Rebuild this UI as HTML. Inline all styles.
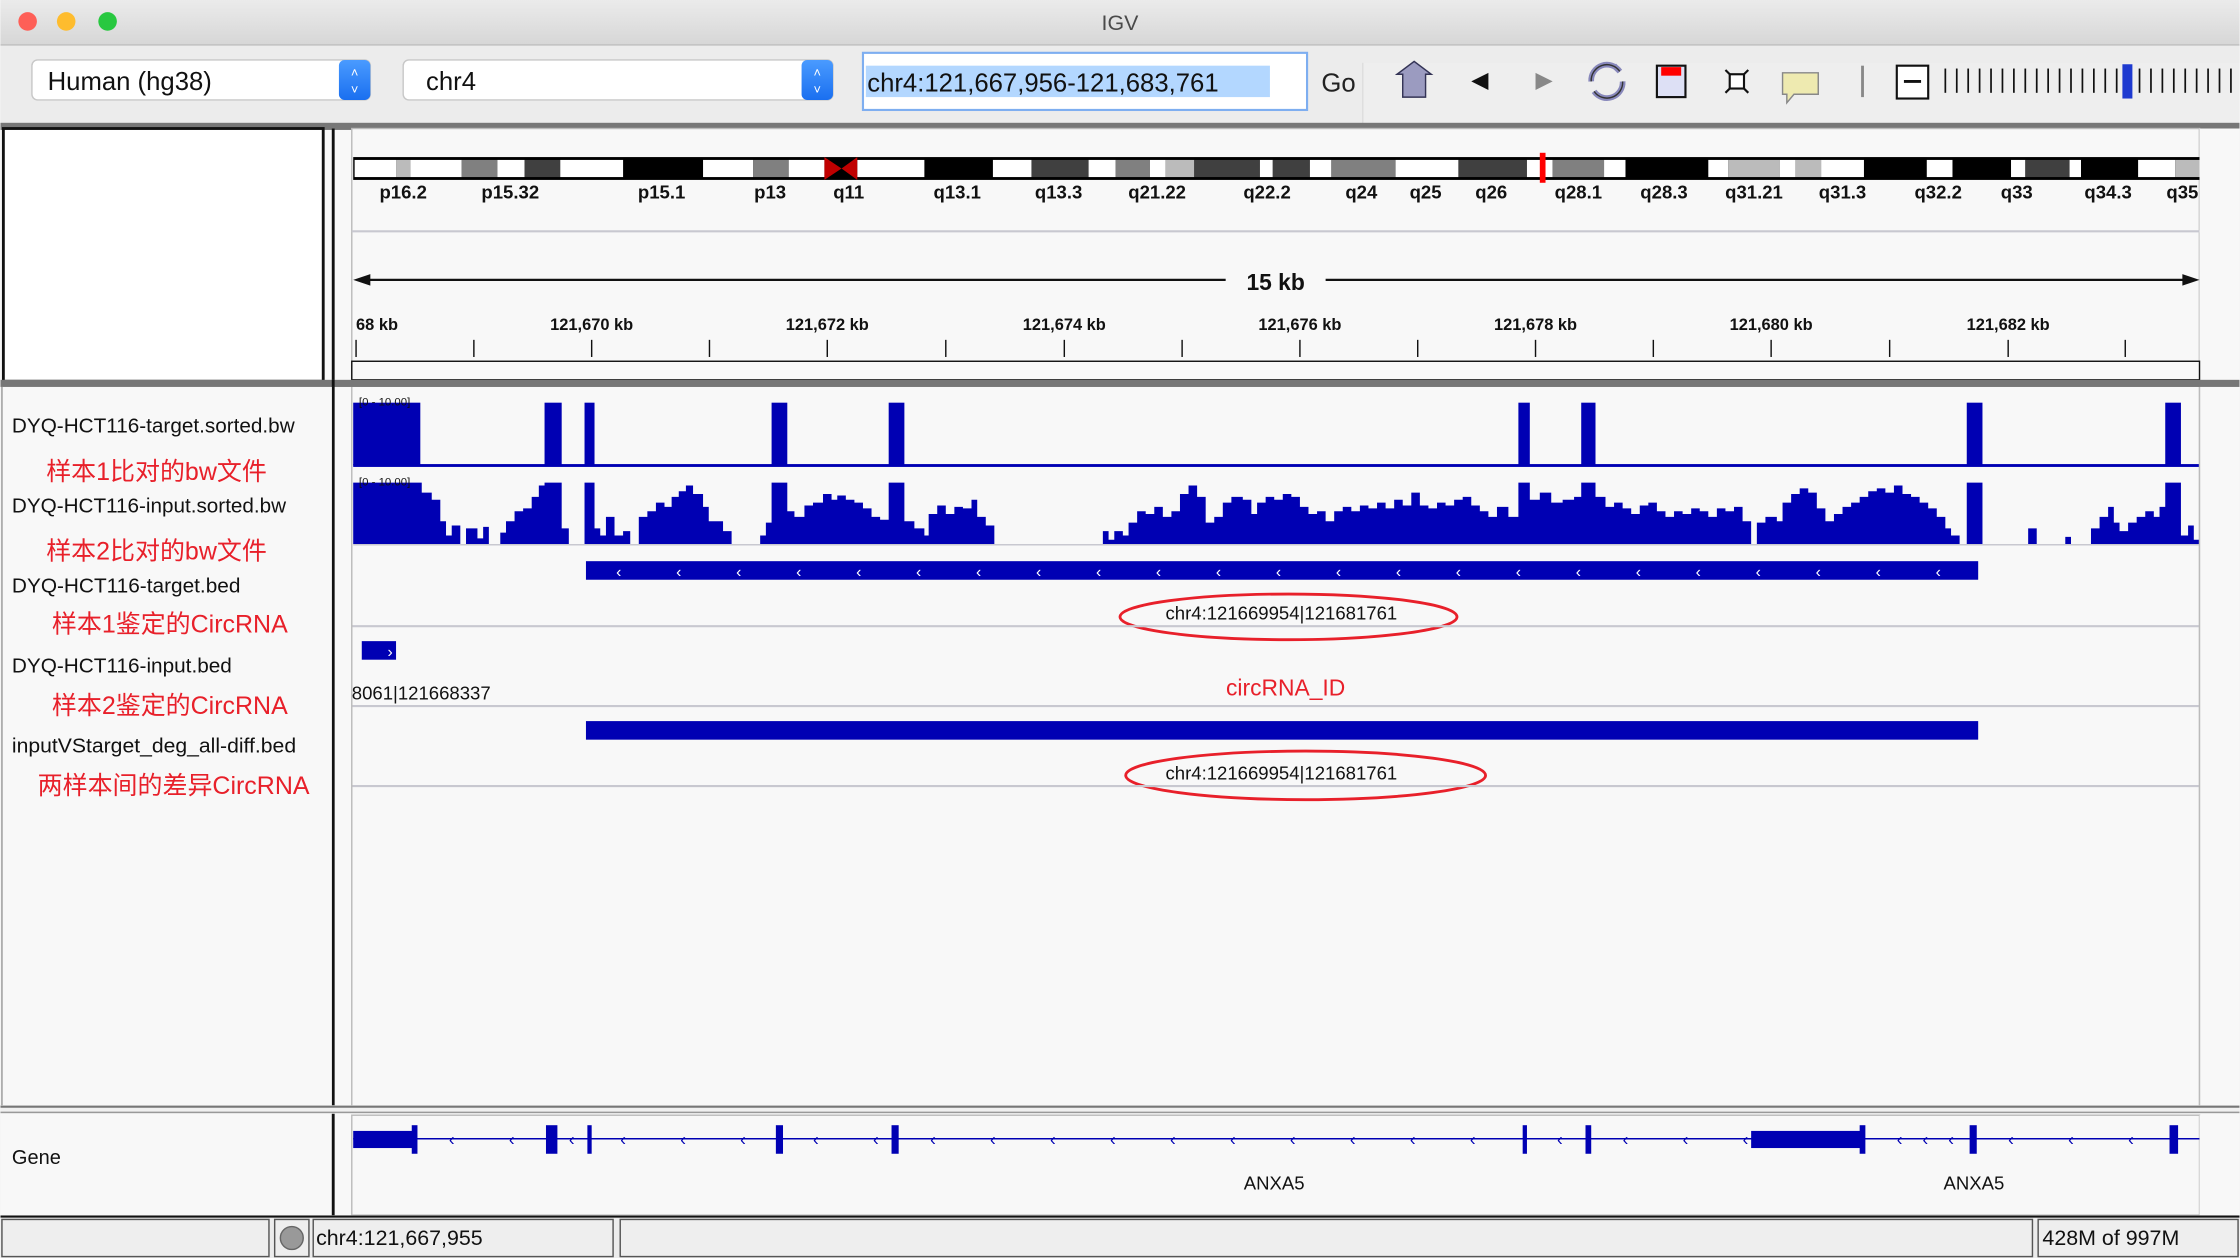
<!DOCTYPE html>
<html><head><meta charset="utf-8"><style>
html,body{margin:0;padding:0;background:#f5f5f5;}
svg{display:block}
text{font-family:"Liberation Sans","Noto Sans CJK SC",sans-serif;}
</style></head><body>
<svg width="2240" height="1258" viewBox="0 0 1568 881" xmlns="http://www.w3.org/2000/svg">
<defs>
<linearGradient id="tb" x1="0" y1="0" x2="0" y2="1"><stop offset="0" stop-color="#ebebeb"/><stop offset="1" stop-color="#d6d6d6"/></linearGradient>
<linearGradient id="bl" x1="0" y1="0" x2="0" y2="1"><stop offset="0" stop-color="#4a9bff"/><stop offset="1" stop-color="#1a6ff0"/></linearGradient>
</defs>
<rect width="1568" height="881" fill="#f8f8f8"/>
<rect width="1568" height="32" fill="url(#tb)"/>
<line x1="0" y1="31.5" x2="1568" y2="31.5" stroke="#bdbdbd"/>
<circle cx="19" cy="15" r="6.5" fill="#fe5f57"/><circle cx="46" cy="15" r="6.5" fill="#febc2e"/><circle cx="75" cy="15" r="6.5" fill="#28c840"/>
<text x="784" y="21" font-size="15" fill="#4a4a4a" text-anchor="middle">IGV</text>
<rect x="0" y="32" width="1568" height="56" fill="#ececec"/>
<rect x="954" y="44" width="614" height="44" fill="#eeeeee"/>
<line x1="954" y1="44" x2="954" y2="88" stroke="#ddd"/>
<rect x="22" y="42" width="237" height="28" rx="4" fill="#fff" stroke="#c8c8c8"/>
<rect x="237" y="42" width="22" height="28" rx="4" fill="url(#bl)"/>
<text x="248" y="54" font-size="9" fill="#fff" text-anchor="middle">˄</text><text x="248" y="66" font-size="9" fill="#fff" text-anchor="middle">˅</text>
<text x="33" y="63" font-size="18" fill="#111">Human (hg38)</text>
<rect x="282" y="42" width="301" height="28" rx="4" fill="#fff" stroke="#c8c8c8"/>
<rect x="561" y="42" width="22" height="28" rx="4" fill="url(#bl)"/>
<text x="572" y="54" font-size="9" fill="#fff" text-anchor="middle">˄</text><text x="572" y="66" font-size="9" fill="#fff" text-anchor="middle">˅</text>
<text x="298" y="63" font-size="18" fill="#111">chr4</text>
<rect x="604" y="37" width="311" height="40" fill="#fff" stroke="#7eaef0" stroke-width="1.5"/>
<rect x="606" y="46" width="283" height="22" fill="#b3d7ff"/>
<text x="607" y="64" font-size="18" fill="#111">chr4:121,667,956-121,683,761</text>
<text x="925" y="64" font-size="18" fill="#222">Go</text>
<path d="M978 52 L990 43 L1002 52 L998 52 L998 68 L982 68 L982 52 Z" fill="#9b9bc0" stroke="#333355"/>
<path d="M1042 51 L1030 57 L1042 63 Z" fill="#111"/>
<path d="M1075 51 L1087 57 L1075 63 Z" fill="#888"/>
<path d="M1114 57 A11 11 0 0 1 1134 50 L1130 46 M1136 57 A11 11 0 0 1 1116 64" fill="none" stroke="#8888bb" stroke-width="4"/>
<path d="M1114 57 A11 11 0 0 1 1134 50 M1136 57 A11 11 0 0 1 1116 64" fill="none" stroke="#333" stroke-width="1"/>
<rect x="1160" y="46" width="20" height="22" fill="#dde0f5" stroke="#111" stroke-width="1.5"/><rect x="1163" y="47" width="14" height="6" fill="#f00"/>
<path d="M1208 49 L1212 53 M1224 49 L1220 53 M1208 65 L1212 61 M1224 65 L1220 61" stroke="#111" stroke-width="1.5"/>
<rect x="1211" y="52" width="10" height="10" fill="#fff" stroke="#111" stroke-width="1.5"/>
<path d="M1248 51 H1273 V66 H1256 L1251 72 V66 H1248 Z" fill="#eeeab0" stroke="#888"/>
<line x1="1304" y1="46" x2="1304" y2="68" stroke="#888" stroke-width="2"/>
<rect x="1328" y="46" width="22" height="23" fill="#fff" stroke="#111" stroke-width="1.5"/><line x1="1333" y1="57" x2="1345" y2="57" stroke="#111" stroke-width="2"/>
<g stroke="#111" stroke-width="1.2">
<line x1="1362" y1="48" x2="1362" y2="65"/><line x1="1370" y1="48" x2="1370" y2="65"/><line x1="1378" y1="48" x2="1378" y2="65"/><line x1="1386" y1="48" x2="1386" y2="65"/><line x1="1394" y1="48" x2="1394" y2="65"/><line x1="1402" y1="48" x2="1402" y2="65"/><line x1="1410" y1="48" x2="1410" y2="65"/><line x1="1418" y1="48" x2="1418" y2="65"/><line x1="1426" y1="48" x2="1426" y2="65"/><line x1="1434" y1="48" x2="1434" y2="65"/><line x1="1442" y1="48" x2="1442" y2="65"/><line x1="1450" y1="48" x2="1450" y2="65"/><line x1="1458" y1="48" x2="1458" y2="65"/><line x1="1466" y1="48" x2="1466" y2="65"/><line x1="1474" y1="48" x2="1474" y2="65"/><line x1="1482" y1="48" x2="1482" y2="65"/><line x1="1498" y1="48" x2="1498" y2="65"/><line x1="1506" y1="48" x2="1506" y2="65"/><line x1="1514" y1="48" x2="1514" y2="65"/><line x1="1522" y1="48" x2="1522" y2="65"/><line x1="1530" y1="48" x2="1530" y2="65"/><line x1="1538" y1="48" x2="1538" y2="65"/><line x1="1546" y1="48" x2="1546" y2="65"/><line x1="1554" y1="48" x2="1554" y2="65"/><line x1="1562" y1="48" x2="1562" y2="65"/>
</g>
<rect x="1486" y="45" width="7" height="24" fill="#1e3ad0"/>
<rect x="0" y="86" width="1568" height="5" fill="#777"/>
<rect x="2" y="90" width="224" height="177" fill="#fff" stroke="#111" stroke-width="2"/>
<rect x="232" y="90" width="2" height="791" fill="#111"/>
<rect x="246" y="90" width="1294" height="178" fill="#f8f8f8" stroke="#bbb"/>
<line x1="1540" y1="90" x2="1540" y2="775" stroke="#bbb"/>
<rect x="247" y="110" width="1293" height="16" fill="#000"/>
<g>
<rect x="248" y="112" width="29" height="12" fill="#fff"/><rect x="277" y="112" width="10" height="12" fill="#bbb"/><rect x="287" y="112" width="36" height="12" fill="#fff"/><rect x="323" y="112" width="25" height="12" fill="#808080"/><rect x="348" y="112" width="19" height="12" fill="#fff"/><rect x="367" y="112" width="25" height="12" fill="#404040"/><rect x="392" y="112" width="44" height="12" fill="#fff"/><rect x="492" y="112" width="35" height="12" fill="#fff"/><rect x="527" y="112" width="25" height="12" fill="#808080"/><rect x="552" y="112" width="25" height="12" fill="#fff"/>
<rect x="600" y="112" width="47" height="12" fill="#fff"/><rect x="695" y="112" width="27" height="12" fill="#fff"/><rect x="722" y="112" width="40" height="12" fill="#404040"/><rect x="762" y="112" width="19" height="12" fill="#fff"/><rect x="781" y="112" width="24" height="12" fill="#808080"/><rect x="805" y="112" width="11" height="12" fill="#fff"/><rect x="816" y="112" width="20" height="12" fill="#bbb"/><rect x="836" y="112" width="46" height="12" fill="#404040"/><rect x="882" y="112" width="9" height="12" fill="#fff"/><rect x="891" y="112" width="26" height="12" fill="#404040"/><rect x="917" y="112" width="15" height="12" fill="#fff"/><rect x="932" y="112" width="45" height="12" fill="#808080"/><rect x="977" y="112" width="44" height="12" fill="#fff"/><rect x="1021" y="112" width="48" height="12" fill="#404040"/><rect x="1069" y="112" width="18" height="12" fill="#fff"/><rect x="1087" y="112" width="36" height="12" fill="#808080"/><rect x="1123" y="112" width="15" height="12" fill="#fff"/><rect x="1196" y="112" width="14" height="12" fill="#fff"/><rect x="1210" y="112" width="36" height="12" fill="#bbb"/><rect x="1246" y="112" width="11" height="12" fill="#fff"/><rect x="1257" y="112" width="18" height="12" fill="#bbb"/><rect x="1275" y="112" width="30" height="12" fill="#fff"/><rect x="1349" y="112" width="18" height="12" fill="#fff"/><rect x="1408" y="112" width="10" height="12" fill="#fff"/><rect x="1418" y="112" width="31" height="12" fill="#404040"/><rect x="1449" y="112" width="8" height="12" fill="#fff"/><rect x="1497" y="112" width="26" height="12" fill="#fff"/><rect x="1523" y="112" width="17" height="12" fill="#bbb"/>
</g>
<path d="M577 110 L589 118 L600 110 V126 L589 118 L577 126 Z" fill="#c00000"/>
<rect x="1078" y="107" width="4" height="21" fill="#f00"/>
<g font-size="13" font-weight="bold" fill="#111" text-anchor="middle">
<text x="282" y="139">p16.2</text><text x="357" y="139">p15.32</text><text x="463" y="139">p15.1</text><text x="539" y="139">p13</text><text x="594" y="139">q11</text><text x="670" y="139">q13.1</text><text x="741" y="139">q13.3</text><text x="810" y="139">q21.22</text><text x="887" y="139">q22.2</text><text x="953" y="139">q24</text><text x="998" y="139">q25</text><text x="1044" y="139">q26</text><text x="1105" y="139">q28.1</text><text x="1165" y="139">q28.3</text><text x="1228" y="139">q31.21</text><text x="1290" y="139">q31.3</text><text x="1357" y="139">q32.2</text><text x="1412" y="139">q33</text><text x="1476" y="139">q34.3</text><text x="1528" y="139">q35</text>
</g>
<rect x="1540" y="90" width="28" height="180" fill="#f8f8f8"/>
<line x1="246" y1="162" x2="1540" y2="162" stroke="#c8c8d0" stroke-width="1.5"/>
<line x1="250" y1="196" x2="858" y2="196" stroke="#111" stroke-width="1.5"/><line x1="928" y1="196" x2="1536" y2="196" stroke="#111" stroke-width="1.5"/>
<path d="M247 196 L259 192 L259 200 Z M1540 196 L1528 192 L1528 200 Z" fill="#111"/>
<text x="893" y="203" font-size="16" font-weight="bold" fill="#111" text-anchor="middle">15 kb</text>
<g font-size="11.5" font-weight="bold" fill="#111" text-anchor="middle">
<text x="249" y="231" text-anchor="start">68 kb</text><text x="414" y="231">121,670 kb</text><text x="579" y="231">121,672 kb</text><text x="745" y="231">121,674 kb</text><text x="910" y="231">121,676 kb</text><text x="1075" y="231">121,678 kb</text><text x="1240" y="231">121,680 kb</text><text x="1406" y="231">121,682 kb</text>
</g>
<g stroke="#111" stroke-width="1">
<line x1="249" y1="238" x2="249" y2="250"/><line x1="331.5" y1="238" x2="331.5" y2="250"/><line x1="414" y1="238" x2="414" y2="250"/><line x1="496.5" y1="238" x2="496.5" y2="250"/><line x1="579" y1="238" x2="579" y2="250"/><line x1="662" y1="238" x2="662" y2="250"/><line x1="745" y1="238" x2="745" y2="250"/><line x1="827.5" y1="238" x2="827.5" y2="250"/><line x1="910" y1="238" x2="910" y2="250"/><line x1="992.5" y1="238" x2="992.5" y2="250"/><line x1="1075" y1="238" x2="1075" y2="250"/><line x1="1157.5" y1="238" x2="1157.5" y2="250"/><line x1="1240" y1="238" x2="1240" y2="250"/><line x1="1323" y1="238" x2="1323" y2="250"/><line x1="1406" y1="238" x2="1406" y2="250"/><line x1="1488" y1="238" x2="1488" y2="250"/>
</g>
<rect x="246" y="253" width="1294" height="13" fill="#f8f8f8" stroke="#111"/>
<rect x="0" y="266" width="1568" height="5" fill="#777"/>
<rect x="232" y="266" width="2" height="5" fill="#111"/>
<rect x="0" y="271" width="232" height="504" fill="#f8f8f8"/>
<line x1="1" y1="271" x2="1" y2="775" stroke="#999"/>
<g font-size="14.5" fill="#111">
<text x="8" y="303" textLength="198" lengthAdjust="spacingAndGlyphs">DYQ-HCT116-target.sorted.bw</text>
<text x="8" y="359" textLength="192" lengthAdjust="spacingAndGlyphs">DYQ-HCT116-input.sorted.bw</text>
<text x="8" y="415" textLength="160" lengthAdjust="spacingAndGlyphs">DYQ-HCT116-target.bed</text>
<text x="8" y="471" textLength="154" lengthAdjust="spacingAndGlyphs">DYQ-HCT116-input.bed</text>
<text x="8" y="527" textLength="199" lengthAdjust="spacingAndGlyphs">inputVStarget_deg_all-diff.bed</text>
</g>
<g font-size="17.5" fill="#e8202a">
<text x="32" y="336">样本1比对的bw文件</text>
<text x="32" y="392">样本2比对的bw文件</text>
<text x="36" y="443">样本1鉴定的CircRNA</text>
<text x="36" y="500">样本2鉴定的CircRNA</text>
<text x="26" y="556">两样本间的差异CircRNA</text>
</g>
<g fill="#0000b3">
<rect x="247" y="282" width="47" height="44"/><rect x="381" y="282" width="12" height="44"/><rect x="409" y="282" width="7" height="44"/><rect x="540" y="282" width="11" height="44"/><rect x="622" y="282" width="11" height="44"/><rect x="1063" y="282" width="8" height="44"/><rect x="1107" y="282" width="10" height="44"/><rect x="1377" y="282" width="11" height="44"/><rect x="1516" y="282" width="11" height="44"/>
<rect x="247" y="325" width="1293" height="2"/>
</g>
<text x="251" y="284" font-size="8" fill="#111">[0 - 10.00]</text>
<path fill="#0000b3" d="M247 381 V338 H295 V345 H302 V350 H308 V365 H312 V375 H316 V368 H322 V381 H326 V370 H334 V377 H338 V369 H342 V381 H350 V373 H354 V365 H360 V358 H366 V356 H372 V348 H377 V340 H381 V338 H393 V370 H398 V381 H409 V338 H416 V370 H420 V375 H424 V362 H430 V375 H436 V372 H441 V381 H447 V362 H453 V358 H459 V352 H465 V355 H470 V348 H475 V344 H480 V340 H485 V346 H492 V355 H496 V365 H501 V365 H506 V372 H512 V381 H532 V375 H536 V366 H540 V338 H551 V358 H556 V362 H563 V354 H569 V352 H576 V346 H582 V350 H586 V347 H592 V350 H598 V352 H604 V356 H610 V362 H616 V364 H622 V338 H633 V365 H640 V370 H647 V375 H650 V360 H656 V354 H662 V360 H668 V355 H674 V356 H680 V350 H684 V362 H690 V368 H696 V381 H772 V372 H776 V378 H780 V372 H786 V375 H790 V366 H796 V358 H802 V360 H808 V355 H814 V362 H820 V358 H826 V346 H832 V340 H838 V348 H844 V366 H850 V362 H856 V352 H862 V348 H870 V350 H876 V360 H880 V352 H886 V348 H892 V350 H898 V346 H904 V348 H910 V355 H916 V360 H922 V358 H928 V365 H934 V358 H940 V355 H946 V358 H952 V354 H958 V356 H964 V352 H970 V356 H976 V350 H982 V354 H988 V345 H994 V354 H1000 V356 H1006 V352 H1012 V354 H1018 V350 H1024 V348 H1030 V354 H1036 V358 H1042 V362 H1048 V355 H1056 V362 H1063 V338 H1071 V350 H1078 V345 H1086 V352 H1094 V350 H1102 V348 H1107 V338 H1117 V348 H1124 V355 H1130 V352 H1136 V356 H1142 V360 H1148 V354 H1154 V352 H1160 V358 H1166 V362 H1172 V358 H1178 V360 H1184 V356 H1190 V358 H1196 V362 H1202 V356 H1208 V358 H1214 V355 H1220 V365 H1226 V381 H1230 V366 H1236 V362 H1244 V365 H1248 V352 H1254 V346 H1260 V342 H1266 V345 H1272 V356 H1278 V365 H1284 V360 H1290 V355 H1296 V352 H1302 V348 H1308 V344 H1314 V342 H1320 V345 H1326 V340 H1332 V346 H1338 V348 H1344 V352 H1350 V356 H1356 V362 H1362 V370 H1366 V375 H1372 V381 H1377 V338 H1388 V381 H1420 V370 H1426 V381 H1446 V376 H1450 V381 H1464 V370 H1470 V362 H1476 V355 H1480 V366 H1484 V372 H1490 V366 H1496 V362 H1502 V358 H1508 V362 H1512 V355 H1516 V338 H1527 V375 H1532 V368 H1536 V378 H1540 V381 Z"/>
<line x1="247" y1="381.5" x2="1540" y2="381.5" stroke="#c8c8d0"/>
<text x="251" y="340" font-size="8" fill="#111">[0 - 10.00]</text>
<rect x="410" y="393" width="975" height="13" fill="#0000b3"/>
<g fill="#fff" font-size="11" text-anchor="middle">
<text x="433" y="404">‹</text><text x="475" y="404">‹</text><text x="517" y="404">‹</text><text x="559" y="404">‹</text><text x="601" y="404">‹</text><text x="643" y="404">‹</text><text x="685" y="404">‹</text><text x="727" y="404">‹</text><text x="769" y="404">‹</text><text x="811" y="404">‹</text><text x="853" y="404">‹</text><text x="895" y="404">‹</text><text x="937" y="404">‹</text><text x="979" y="404">‹</text><text x="1021" y="404">‹</text><text x="1063" y="404">‹</text><text x="1105" y="404">‹</text><text x="1147" y="404">‹</text><text x="1189" y="404">‹</text><text x="1231" y="404">‹</text><text x="1273" y="404">‹</text><text x="1315" y="404">‹</text><text x="1357" y="404">‹</text>
</g>
<text x="897" y="434" font-size="13" fill="#111" text-anchor="middle">chr4:121669954|121681761</text>
<ellipse cx="902" cy="432" rx="118" ry="16" fill="none" stroke="#e8202a" stroke-width="2"/>
<line x1="246" y1="438.5" x2="1540" y2="438.5" stroke="#c8c8d0" stroke-width="1.5"/>
<rect x="253" y="449" width="24" height="13" fill="#0000b3"/>
<text x="271" y="460" font-size="11" fill="#fff">›</text>
<text x="246" y="490" font-size="13" fill="#111">8061|121668337</text>
<text x="900" y="487" font-size="16" fill="#e8202a" text-anchor="middle">circRNA_ID</text>
<line x1="246" y1="494.5" x2="1540" y2="494.5" stroke="#c8c8d0" stroke-width="1.5"/>
<rect x="410" y="505" width="975" height="13" fill="#0000b3"/>
<text x="897" y="546" font-size="13" fill="#111" text-anchor="middle">chr4:121669954|121681761</text>
<ellipse cx="914" cy="543" rx="126" ry="17" fill="none" stroke="#e8202a" stroke-width="2"/>
<line x1="246" y1="550.5" x2="1540" y2="550.5" stroke="#c8c8d0" stroke-width="1.5"/>
<rect x="1540" y="271" width="28" height="504" fill="#f8f8f8"/>
<line x1="1540" y1="271" x2="1540" y2="775" stroke="#bbb"/>
<line x1="246" y1="271" x2="246" y2="775" stroke="#bbb"/>
<rect x="0" y="774" width="1568" height="6" fill="#f0f0f0"/>
<line x1="0" y1="775" x2="1568" y2="775" stroke="#777" stroke-width="1.5"/>
<line x1="0" y1="779" x2="1568" y2="779" stroke="#999"/>
<text x="8" y="815" font-size="14" fill="#111">Gene</text>
<rect x="246" y="781" width="1294" height="70" fill="#f8f8f8" stroke="#bbb"/>
<line x1="247" y1="797.5" x2="1540" y2="797.5" stroke="#0000b3" stroke-width="1"/>
<g fill="#0000b3">
<rect x="247" y="792" width="44" height="12"/><rect x="288" y="788" width="4" height="20"/><rect x="382" y="788" width="8" height="20"/><rect x="411" y="788" width="3" height="20"/><rect x="543" y="788" width="5" height="20"/><rect x="624" y="788" width="5" height="20"/><rect x="1066" y="788" width="3" height="20"/><rect x="1110" y="788" width="4" height="20"/><rect x="1226" y="792" width="78" height="12"/><rect x="1302" y="788" width="4" height="20"/><rect x="1379" y="788" width="5" height="20"/><rect x="1519" y="788" width="6" height="20"/>
</g>
<g fill="#0000b3" font-size="12" text-anchor="middle">
<text x="316" y="802">‹</text><text x="358" y="802">‹</text><text x="400" y="802">‹</text><text x="436" y="802">‹</text><text x="478" y="802">‹</text><text x="520" y="802">‹</text><text x="571" y="802">‹</text><text x="613" y="802">‹</text><text x="653" y="802">‹</text><text x="695" y="802">‹</text><text x="737" y="802">‹</text><text x="779" y="802">‹</text><text x="821" y="802">‹</text><text x="863" y="802">‹</text><text x="905" y="802">‹</text><text x="947" y="802">‹</text><text x="989" y="802">‹</text><text x="1031" y="802">‹</text><text x="1092" y="802">‹</text><text x="1138" y="802">‹</text><text x="1180" y="802">‹</text><text x="1222" y="802">‹</text><text x="1330" y="802">‹</text><text x="1348" y="802">‹</text><text x="1366" y="802">‹</text><text x="1408" y="802">‹</text><text x="1450" y="802">‹</text><text x="1492" y="802">‹</text>
</g>
<g font-size="13" fill="#111" text-anchor="middle"><text x="892" y="833">ANXA5</text><text x="1382" y="833">ANXA5</text></g>
<rect x="1540" y="781" width="28" height="70" fill="#f8f8f8"/>
<rect x="0" y="851" width="1568" height="30" fill="#ececec"/>
<line x1="0" y1="852" x2="1568" y2="852" stroke="#111" stroke-width="1.5"/>
<rect x="1" y="854" width="187" height="26" fill="#eee" stroke="#555"/>
<rect x="192" y="854" width="24" height="26" fill="#eee" stroke="#555"/>
<circle cx="204" cy="867" r="8" fill="#999" stroke="#666"/>
<rect x="219" y="854" width="210" height="26" fill="#eee" stroke="#555"/>
<text x="221" y="872" font-size="15" fill="#111">chr4:121,667,955</text>
<rect x="434" y="854" width="989" height="26" fill="#eee" stroke="#555"/>
<rect x="1427" y="854" width="140" height="26" fill="#eee" stroke="#555"/>
<text x="1430" y="872" font-size="15" fill="#111">428M of 997M</text>
</svg>
</body></html>
